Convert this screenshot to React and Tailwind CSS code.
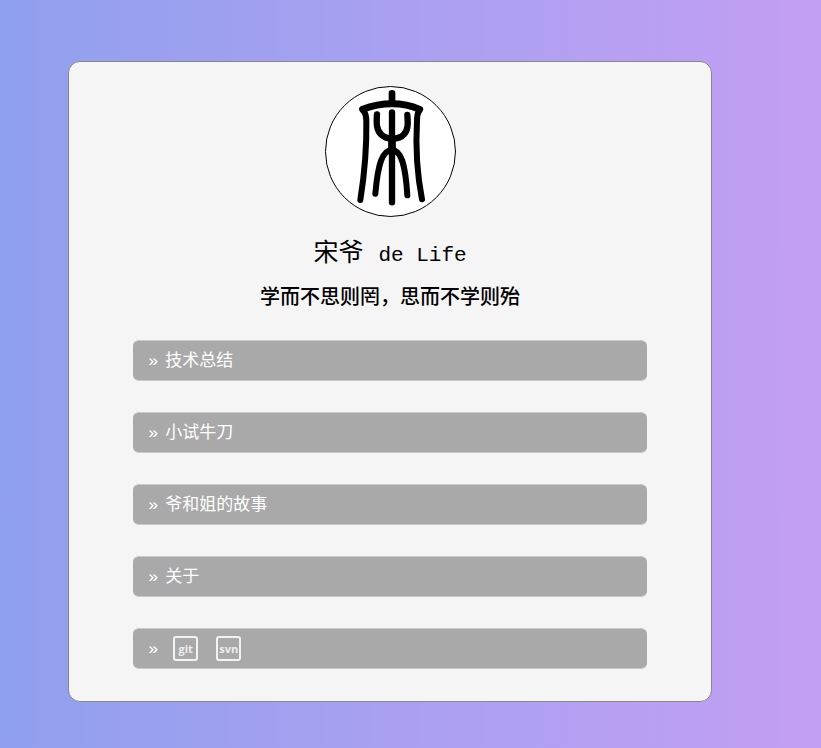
import React from "react";

const links = ["技术总结", "小试牛刀", "爷和姐的故事", "关于"];

const rowClass =
  "flex h-[41px] items-center rounded-md border border-[#c8c8c8] border-x-[#a9a9a9] bg-[#a9a9a9] px-[14px] pt-[3px] text-[17px] leading-6 text-white";

function Seal() {
  return (
    <svg
      viewBox="42 33 393 393"
      className="size-[131px]"
      role="img"
      aria-label="宋"
      fill="none"
      stroke="#000"
      strokeLinecap="round"
      strokeLinejoin="round"
    >
      <circle cx="238.5" cy="229.5" r="195" fill="#fff" strokeWidth="3" />
      <path d="M243 55V84" strokeWidth="20" />
      <path d="M155 103C185 91 215 86 243 86C271 86 299 91 326 103" strokeWidth="21" />
      <path d="M158 108C164 116 166 124 166 136Q168 250 148 375" strokeWidth="18" />
      <path d="M324 108C319 116 318 124 318 136Q311 260 333 373" strokeWidth="18" />
      <path d="M243 112V382" strokeWidth="19" />
      <path d="M198 118C196 145 196 165 211 179C222 189 232 191 243 191C258 191 271 188 279 178C292 164 291 145 289 120" strokeWidth="19" />
      <path d="M193 356C201 265 214 226 243 225C270 226 283 265 289 361" strokeWidth="18" />
      <path d="M234 188V230H252V188Z" fill="#000" strokeWidth="5" />
    </svg>
  );
}

function RepoLink({ name }) {
  return (
    <a
      href={"#" + name}
      className="flex size-[25px] items-center justify-center rounded-[3px] border-2 border-[#f2f2f2] font-['Open_Sans',sans-serif] text-[11px] leading-5 font-bold text-[#eeeeee]"
    >
      {name}
    </a>
  );
}

export default function App() {
  return (
    <div className="min-h-screen bg-linear-to-r from-[#8fa0ee] to-[#c39ff3] pt-[61px] pr-[109px] pb-[47px] pl-[68px] font-['Liberation_Mono','Noto_Sans_CJK_SC',monospace]">
      <main className="flex flex-col items-center rounded-xl border border-[#888] bg-[#f5f5f5] pt-6 pb-8 text-black">
        <Seal />
        <h1 className="mt-[22px] text-[25px] leading-8 whitespace-nowrap">
          宋爷 <span className="text-[21px]">de Life</span>
        </h1>
        <h2 className="mt-[11px] text-[20px] leading-8 font-medium">学而不思则罔，思而不学则殆</h2>
        <nav className="mt-[25px] w-4/5">
          <ul className="flex flex-col gap-[31px]">
            {links.map((label) => (
              <li key={label}>
                <a href={"#" + label} className={rowClass}>
                  <span className="w-[17px]">»</span>
                  {label}
                </a>
              </li>
            ))}
            <li className={rowClass}>
              <span className="w-[25px]">»</span>
              <span className="flex gap-[18px] pb-[3px]">
                <RepoLink name="git" />
                <RepoLink name="svn" />
              </span>
            </li>
          </ul>
        </nav>
      </main>
    </div>
  );
}
